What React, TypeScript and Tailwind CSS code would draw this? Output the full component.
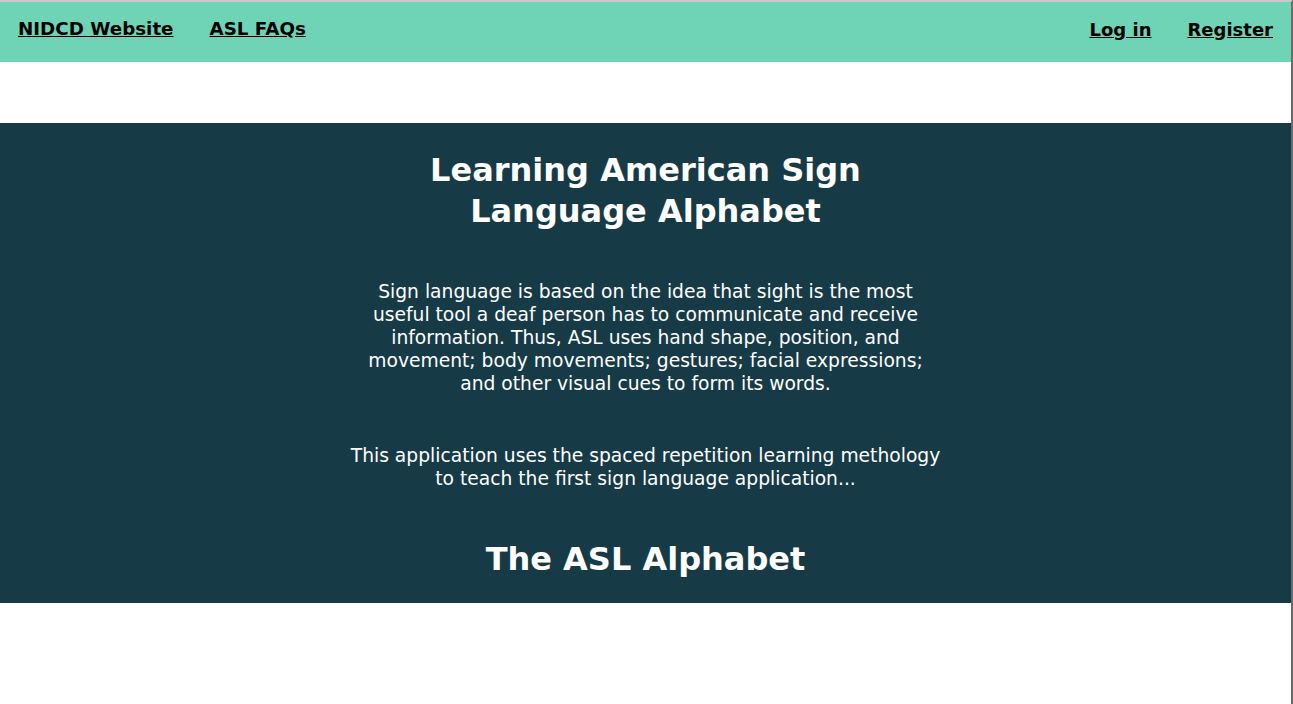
export default function App() {
  const font = { fontFamily: '"DejaVu Sans", Verdana, sans-serif' };
  return (
    <div className="min-h-[704px] bg-white border-t-2 border-[#c9c9c9] border-r-2 border-r-[#6b6b6b]" style={font}>
      <nav className="h-[60px] bg-[#6fd4b6] flex items-center justify-between px-[18px] pb-[6px]">
        <div className="flex gap-[36px]">
          <a href="#" className="text-[18.3px] font-bold text-black underline">NIDCD Website</a>
          <a href="#" className="text-[18.3px] font-bold text-black underline">ASL FAQs</a>
        </div>
        <div className="flex gap-[36px]">
          <a href="#" className="text-[18px] font-bold text-black underline">Log in</a>
          <a href="#" className="text-[18px] font-bold text-black underline">Register</a>
        </div>
      </nav>
      <div className="h-[61px]" />
      <section className="bg-[#173b46] text-white flex flex-col items-center pt-[27px] pb-[23px]">
        <h1 className="text-[32px] font-bold leading-[41px] text-center">
          Learning American Sign<br />Language Alphabet
        </h1>
        <p className="mt-[48px] text-[18.7px] leading-[23px] text-center">
          Sign language is based on the idea that sight is the most<br />
          useful tool a deaf person has to communicate and receive<br />
          information. Thus, ASL uses hand shape, position, and<br />
          movement; body movements; gestures; facial expressions;<br />
          and other visual cues to form its words.
        </p>
        <p className="mt-[49px] text-[18.7px] leading-[23px] text-center">
          This application uses the spaced repetition learning methology<br />
          to teach the first sign language application...
        </p>
        <h2 className="mt-[49px] text-[32px] font-bold leading-[41px] text-center">The ASL Alphabet</h2>
      </section>
    </div>
  );
}
